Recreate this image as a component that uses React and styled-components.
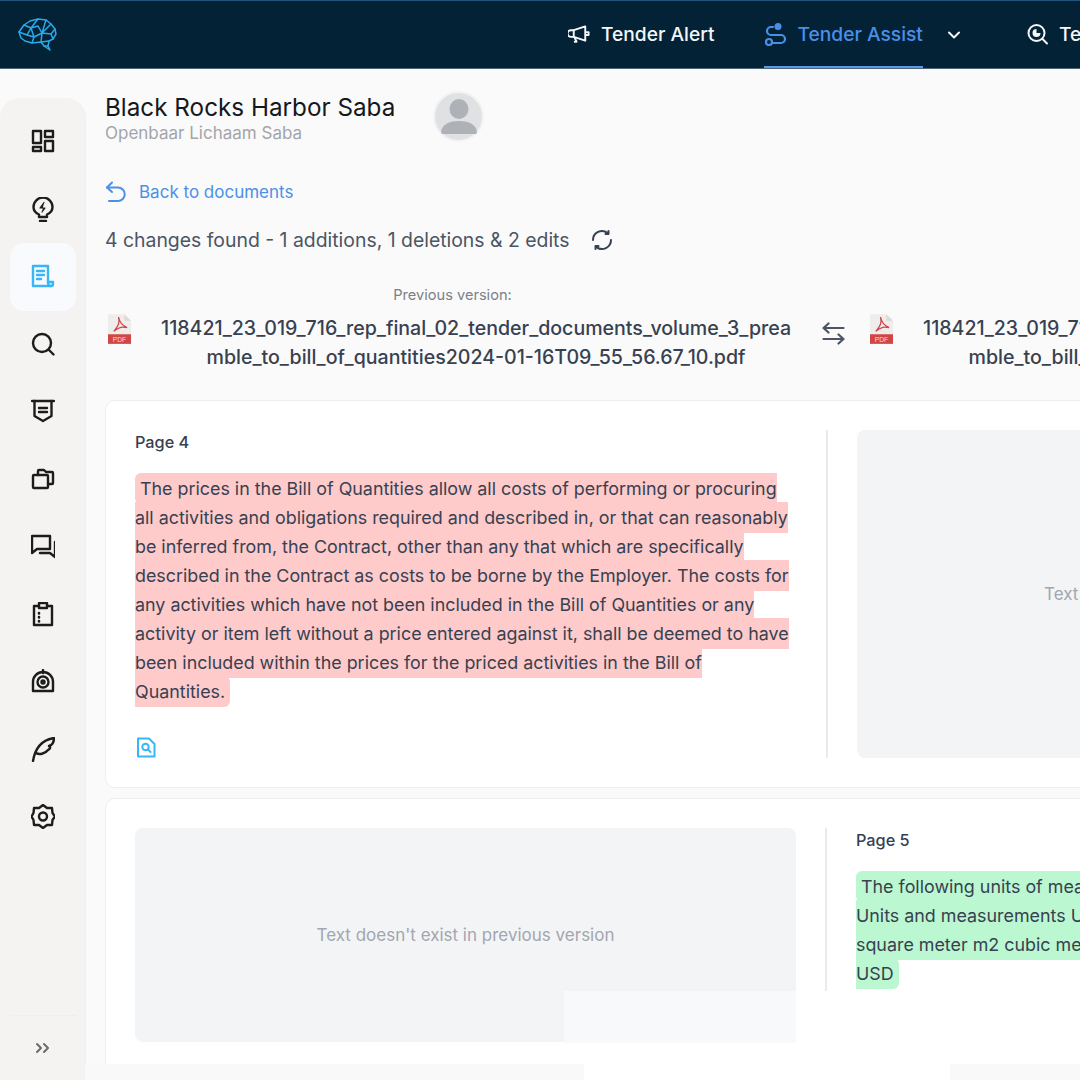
import React from 'react';
import styled, { createGlobalStyle } from 'styled-components';

const GlobalStyle = createGlobalStyle`
  html, body {
    margin: 0;
    padding: 0;
    background: #fafafa;
    font-family: Inter, "Liberation Sans", sans-serif;
  }
  * { box-sizing: border-box; }
`;

const Page = styled.div`
  width: 1080px;
  height: 1080px;
  overflow: hidden;
  position: relative;
  background: #fafafa;
`;

const Header = styled.header`
  height: 69px;
  display: flex;
  align-items: center;
  padding: 0 0 0 18px;
  background: #032236;
  border-top: 1px solid #23527c;
  border-bottom: 1px solid #4d6475;
  white-space: nowrap;
  overflow: hidden;
  > svg { flex: none; }
`;

const Nav = styled.nav`
  display: flex;
  flex: none;
  align-items: stretch;
  height: 67px;
  margin-left: 510px;
`;

const NavItem = styled.a`
  display: flex;
  align-items: center;
  gap: 10px;
  height: 67px;
  margin-right: ${props => props.$gap || 0}px;
  font-size: 19.2px;
  font-weight: 500;
  color: ${props => (props.$active ? '#4a8fe7' : '#f4f6f8')};
  border-bottom: 2px solid ${props => (props.$active ? '#5b9be6' : 'transparent')};
  svg { flex: none; }
`;

const Chevron = styled.span`
  display: flex;
  align-items: center;
  width: 103px;
  padding-left: 24px;
  color: #f4f6f8;
`;

const Body = styled.div`
  display: flex;
  height: 1011px;
`;

const Sidebar = styled.aside`
  flex: none;
  width: 85px;
  margin-top: 29px;
  padding: 10px 9px 0 10px;
  display: flex;
  flex-direction: column;
  background: #f4f3f2;
  border-radius: 20px 20px 0 0;
  box-shadow: 1px 0 0 #f0f0f0;
`;

const SideItem = styled.div`
  flex: none;
  height: 67.5px;
  display: flex;
  align-items: center;
  justify-content: center;
  border-radius: 14px;
  color: ${props => (props.$active ? '#38b6f5' : '#1c1c1c')};
  background: ${props => (props.$active ? '#f8fafd' : 'transparent')};
`;

const SideFooter = styled.div`
  margin-top: auto;
  height: 65px;
  display: flex;
  align-items: center;
  justify-content: center;
  border-top: 1px solid #eceef4;
  color: #6b6b6b;
`;

const Main = styled.main`
  flex: none;
  width: 1500px;
  padding: 22px 0 0 20px;
`;

const TitleRow = styled.div`
  display: flex;
  align-items: flex-start;
  gap: 38px;
  height: 52px;
`;

const TitleBlock = styled.div`
  padding-top: 2px;
`;

const Title = styled.h1`
  margin: 0;
  font-size: 24.25px;
  line-height: 30px;
  font-weight: 400;
  color: #15181c;
`;

const Subtitle = styled.div`
  font-size: 17px;
  line-height: 20px;
  color: #a3a5a9;
`;

const Avatar = styled.div`
  flex: none;
  width: 51px;
  height: 51px;
  border-radius: 50%;
  background: #e0e1e3;
  border: 2px solid #f3f3f3;
  display: flex;
  align-items: center;
  justify-content: center;
`;

const BackLink = styled.a`
  display: flex;
  align-items: center;
  gap: 12px;
  margin-top: 37px;
  height: 24px;
  font-size: 17px;
  color: #4a90e8;
`;

const ChangesRow = styled.div`
  display: flex;
  align-items: center;
  gap: 21px;
  margin-top: 24px;
  height: 24px;
  font-size: 19.4px;
  color: #4b5563;
`;

const FileRow = styled.div`
  display: flex;
  margin-top: 33px;
  height: 115px;
`;

const FileCol = styled.div`
  flex: none;
  width: 695px;
`;

const VersionLabel = styled.div`
  height: 20px;
  font-size: 14.6px;
  line-height: 20px;
  text-align: center;
  color: #7b8087;
`;

const FileLine = styled.div`
  display: flex;
  margin-top: 9px;
  padding-left: 3px;
`;

const FileName = styled.div`
  width: 640px;
  margin-left: 25px;
  font-size: 19.58px;
  font-weight: 500;
  line-height: 29px;
  text-align: center;
  word-break: break-all;
  color: #374151;
`;

const SwapCol = styled.div`
  flex: none;
  width: 67px;
  padding: 37px 0 0 22px;
  color: #4b5563;
`;

const Card = styled.section`
  display: flex;
  width: 1443px;
  margin-bottom: 10px;
  padding: 29px;
  background: #fff;
  border: 1px solid #eeeeee;
  border-radius: 10px;
  height: ${props => props.$height}px;
`;

const Column = styled.div`
  flex: none;
  width: 662px;
  height: ${props => props.$height}px;
`;

const Divider = styled.div`
  flex: none;
  width: 2px;
  margin: 0 29px;
  height: ${props => props.$height}px;
  background: #eaeaea;
`;

const PageLabel = styled.div`
  font-size: 16.3px;
  font-weight: 500;
  line-height: 24px;
  color: #374151;
  margin-bottom: 20px;
`;

const DiffText = styled.p`
  margin: 0;
  width: 656px;
  font-size: 17.86px;
  line-height: 29px;
  color: #374151;
`;

const Highlight = styled.span`
  padding: 5px 0;
  border-radius: 6px;
  background: ${props => (props.$added ? '#bbf7d0' : '#fecaca')};
`;

const InspectButton = styled.div`
  margin-top: 31px;
  padding-left: 1px;
  height: 24px;
  color: #38b6f5;
`;

const Placeholder = styled.div`
  display: flex;
  align-items: center;
  justify-content: ${props => (props.$start ? 'flex-start' : 'center')};
  position: relative;
  width: 662px;
  height: ${props => props.$height}px;
  padding-left: ${props => (props.$start ? 187 : 0)}px;
  border-radius: 8px;
  background: #f3f4f6;
  font-size: 17px;
  color: #a2a6ae;
  white-space: nowrap;
`;

const FadePatch = styled.div`
  position: absolute;
  left: 429px;
  bottom: -1px;
  width: 232px;
  height: 52px;
  background: #f8f9fb;
`;

const BottomPatch = styled.div`
  position: absolute;
  left: ${props => props.$left}px;
  bottom: 0;
  width: ${props => props.$width}px;
  height: 16px;
  background: ${props => props.$bg};
`;

const BrainLogo = () => (
  <svg width="40" height="34" viewBox="0 0 40 34" fill="none" stroke="#29a9ea" strokeWidth="1.5" strokeLinejoin="round" strokeLinecap="round">
    <path d="M1 14 L6 7 L12 3 L20 1 L28 2 L33 6 L37 11 L38 16 L35 21 L31 23 L30 28 L32 32 L26 28 L23 24 L14 25 L7 23 L3 20 Z" />
    <path d="M6 7 L13 10 L20 1 M13 10 L9 17 L1 14 M9 17 L16 19 L14 25 M16 19 L13 10 M16 19 L24 15 L28 2 M24 15 L20 8 L13 10 M24 15 L33 6 M24 15 L33 16 L37 11 M33 16 L35 21 M24 15 L23 24 M23 24 L31 23 M26 28 L30 28" />
  </svg>
);

const Megaphone = () => (
  <svg width="23" height="20" viewBox="0 0 24 20" fill="none" stroke="currentColor" strokeWidth="2" strokeLinejoin="round" strokeLinecap="round">
    <path d="M18 2 L6 6 H3 a3 3 0 0 0 0 7 H6 L18 17 Z" />
    <path d="M6 6 V13 M7 14 L9 18 H7 M19 8 h2.5 v3 H19" />
  </svg>
);

const RouteIcon = () => (
  <svg width="24" height="24" viewBox="0 0 24 24" fill="none" stroke="currentColor" strokeWidth="2.2" strokeLinecap="round">
    <circle cx="14" cy="4.5" r="3.5" fill="currentColor" stroke="none" />
    <path d="M9 5 H7 a3.5 3.5 0 0 0 0 8 H17 a3.5 3.5 0 0 1 0 8 H9" />
    <circle cx="5" cy="20" r="3" />
  </svg>
);

const ChevronDown = () => (
  <svg width="14" height="14" viewBox="0 0 14 14" fill="none" stroke="currentColor" strokeWidth="2" strokeLinecap="round" strokeLinejoin="round">
    <path d="M2 4.5 L7 9.5 L12 4.5" />
  </svg>
);

const SearchPie = () => (
  <svg width="23" height="22" viewBox="0 0 22 22" fill="none" stroke="currentColor" strokeWidth="2" strokeLinecap="round">
    <circle cx="10" cy="10" r="8" />
    <path d="M16 16 L20.5 20.5" />
    <path d="M10 6 a4 4 0 1 0 4 4 H10 Z" fill="currentColor" stroke="none" />
  </svg>
);

const sideIcons = [
  <g key="dash"><rect x="2" y="2" width="8" height="12" /><rect x="14" y="2" width="8" height="6" /><rect x="2" y="18" width="8" height="4" /><rect x="14" y="12" width="8" height="10" /></g>,
  <g key="bulb"><path d="M8 20 V17.500 C4.500 16 2.500 13 2.500 10 a9.500 9.500 0 0 1 19 0 C21.500 13 19.500 16 16 17.500 V20 Z" /><path d="M9 24 H15" /><path d="M13 5.500 L9 11 H14 L11 15" fill="currentColor" strokeWidth="1.200" /></g>,
  <g key="doc"><path d="M17 18 V2 H2 V22 H20" /><path d="M6 7 H13 M6 11 H13 M6 15 H10" /><path d="M17 18 H22 V20 a2 2 0 0 1 -2 2 a3 3 0 0 1 -3 -3 Z" /></g>,
  <g key="search"><circle cx="11" cy="11" r="9" /><path d="M18 18 L22.500 22.500" /></g>,
  <g key="banner"><path d="M1 2 H23" /><path d="M3.500 2 V17 L12 22 L20.500 17 V2" /><path d="M8 9 H16 M8 13 H16" /></g>,
  <g key="folders"><path d="M7 8 V4 a1 1 0 0 1 1 -1 H13 L15 5 H21 a1 1 0 0 1 1 1 V16 a1 1 0 0 1 -1 1 H17" /><path d="M3 8 H16 a1 1 0 0 1 1 1 V20 a1 1 0 0 1 -1 1 H3 a1 1 0 0 1 -1 -1 V9 a1 1 0 0 1 1 -1 Z" /></g>,
  <g key="chat"><path d="M1 2 H19 V15 H6 L1 19 Z" /><path d="M24 8 V23 L19 19 H9" /></g>,
  <g key="clip"><path d="M8 4 H3 V23 H21 V4 H16" /><rect x="8" y="1" width="8" height="5" /><path d="M8 11 V11.500 M8 15 V15.500 M8 19 V19.500" strokeWidth="2.600" /></g>,
  <g key="cam"><path d="M12 1 V4" /><path d="M2 22 V13 a10 10 0 0 1 20 0 V22 Z" /><circle cx="12" cy="13" r="5.500" /><circle cx="12" cy="13" r="1.500" /></g>,
  <g key="feather"><path d="M2 24 C4 12 10 3 23 1 C23 5 21 8 18 9 C20 10 19 12 17 13 C14 17 8 18 5 16" /></g>,
  <g key="gear"><path d="M12 1 L16 4 L21 4 L21.500 9 L24 12.500 L21.500 16 L21 21 L16 21 L12 24 L8 21 L3 21 L2.500 16 L0.500 12.500 L2.500 9 L3 4 L8 4 Z" /><circle cx="12" cy="12.500" r="4" /></g>,
];

const SideIcon = ({ children }) => (
  <svg width="24" height="25" viewBox="0 0 24 25" fill="none" stroke="currentColor" strokeWidth="2.400" strokeLinejoin="round" strokeLinecap="round">
    {children}
  </svg>
);

const DoubleChevron = () => (
  <svg width="16" height="12" viewBox="0 0 16 12" fill="none" stroke="currentColor" strokeWidth="2" strokeLinecap="round" strokeLinejoin="round">
    <path d="M2 2 L6 6 L2 10 M9 2 L13 6 L9 10" />
  </svg>
);

const AvatarFigure = () => (
  <svg width="36" height="35" viewBox="0 0 36 35" fill="#aeb1b6">
    <ellipse cx="18" cy="10" rx="9.500" ry="10" />
    <path d="M0 33 C1 25 9 22 18 22 C27 22 35 25 36 33 Q36 35 34 35 H2 Q0 35 0 33 Z" />
  </svg>
);

const BackIcon = () => (
  <svg width="22" height="22" viewBox="0 0 22 22" fill="none" stroke="currentColor" strokeWidth="2" strokeLinecap="round" strokeLinejoin="round">
    <path d="M7 1.500 L2 6.500 L7 11" />
    <path d="M2 6.500 H13 a6.500 6.500 0 0 1 0 13.500 H4" />
  </svg>
);

const RefreshIcon = () => (
  <svg width="22" height="22" viewBox="0 0 22 22" fill="none" stroke="#374151" strokeWidth="2" strokeLinecap="round" strokeLinejoin="round">
    <path d="M2 11 A9 9 0 0 1 16.500 3.900" />
    <path d="M20 11 A9 9 0 0 1 5.500 18.100" />
    <path d="M17.500 2 V5 H14.500" />
    <path d="M4.500 20 V17 H7.500" />
  </svg>
);

const PdfIcon = () => (
  <svg width="23" height="30" viewBox="0 0 24 31" style={{ flex: 'none' }}>
    <path d="M0 0 H17 L24 7 V31 H0 Z" fill="#efedec" />
    <path d="M17 0 L24 7 H17 Z" fill="#dcdada" />
    <rect y="21" width="24" height="10" fill="#d24545" />
    <path d="M11 3 C12 8 12 11 6 18 C12 13 15 13 20 14 C15 12 12 9 11 3 Z" fill="none" stroke="#d24545" strokeWidth="1.300" />
    <text x="12" y="29" textAnchor="middle" fontSize="7" fill="#f6d9d9" fontFamily="Liberation Sans, sans-serif">PDF</text>
  </svg>
);

const SwapIcon = () => (
  <svg width="23" height="23" viewBox="0 0 23 23" fill="none" stroke="currentColor" strokeWidth="2.200" strokeLinecap="round" strokeLinejoin="round">
    <path d="M6.500 1.500 L1.500 6 L6.500 10.500 M1.500 6 H21.500" />
    <path d="M16.500 12.500 L21.500 17 L16.500 21.500 M21.500 17 H1.500" />
  </svg>
);

const FileSearchIcon = () => (
  <svg width="20" height="21" viewBox="0 0 20 21" fill="none" stroke="currentColor" strokeWidth="2" strokeLinecap="round" strokeLinejoin="round">
    <path d="M2 1.500 H13 L18.500 7 V19.500 H2 Z" />
    <circle cx="9.500" cy="10" r="3.200" />
    <path d="M12 12.500 L14.500 15" />
  </svg>
);

const deletedText = '\u00A0The prices in the Bill of Quantities allow all costs of performing or procuring all activities and obligations required and described in, or that can reasonably be inferred from, the Contract, other than any that which are specifically described in the Contract as costs to be borne by the Employer. The costs for any activities which have not been included in the Bill of Quantities or any activity or item left without a price entered against it, shall be deemed to have been included within the prices for the priced activities in the Bill of Quantities.\u00A0';

const addedLines = [
  '\u00A0The following units of measurement and abbreviations',
  'Units and measurements Unit of measure meter m',
  'square meter m2 cubic meter m3 kilogram kg lump sum',
  'USD\u00A0',
];

const fileName = '118421_23_019_716_rep_final_02_tender_documents_volume_3_preamble_to_bill_of_quantities2024-01-16T09_55_56.67_10.pdf';

const FileBlock = ({ label }) => (
  <FileCol>
    <VersionLabel>{label}</VersionLabel>
    <FileLine>
      <PdfIcon />
      <FileName>{fileName}</FileName>
    </FileLine>
  </FileCol>
);

const App = () => (
  <Page>
    <GlobalStyle />
    <Header>
      <BrainLogo />
      <Nav>
        <NavItem $gap={49}><Megaphone />Tender Alert</NavItem>
        <NavItem $active><RouteIcon />Tender Assist</NavItem>
        <Chevron><ChevronDown /></Chevron>
        <NavItem><SearchPie />Tender Insights</NavItem>
      </Nav>
    </Header>
    <Body>
      <Sidebar>
        {sideIcons.map((icon, i) => (
          <SideItem key={i} $active={i === 2}>
            <SideIcon>{icon}</SideIcon>
          </SideItem>
        ))}
        <SideFooter><DoubleChevron /></SideFooter>
      </Sidebar>
      <Main>
        <TitleRow>
          <TitleBlock>
            <Title>Black Rocks Harbor Saba</Title>
            <Subtitle>Openbaar Lichaam Saba</Subtitle>
          </TitleBlock>
          <Avatar><AvatarFigure /></Avatar>
        </TitleRow>
        <BackLink><BackIcon />Back to documents</BackLink>
        <ChangesRow>
          4 changes found - 1 additions, 1 deletions &amp; 2 edits
          <RefreshIcon />
        </ChangesRow>
        <FileRow>
          <FileBlock label="Previous version:" />
          <SwapCol><SwapIcon /></SwapCol>
          <FileBlock label="Current version:" />
        </FileRow>
        <Card $height={388}>
          <Column $height={328}>
            <PageLabel>Page 4</PageLabel>
            <DiffText><Highlight>{deletedText}</Highlight></DiffText>
            <InspectButton><FileSearchIcon /></InspectButton>
          </Column>
          <Divider $height={328} />
          <Placeholder $height={328} $start>Text doesn't exist in current version</Placeholder>
        </Card>
        <Card $height={300}>
          <Placeholder $height={214}>
            Text doesn't exist in previous version
            <FadePatch />
          </Placeholder>
          <Divider $height={163} />
          <Column $height={163}>
            <PageLabel>Page 5</PageLabel>
            <DiffText>
              <Highlight $added>
                {addedLines.map((line, i) => (
                  <React.Fragment key={i}>{line}{i < addedLines.length - 1 && <br />}</React.Fragment>
                ))}
              </Highlight>
            </DiffText>
          </Column>
        </Card>
      </Main>
    </Body>
    <BottomPatch $left={85} $width={499} $bg="#f9f9f9" />
    <BottomPatch $left={584} $width={366} $bg="#ffffff" />
    <BottomPatch $left={950} $width={130} $bg="#f9f9f9" />
  </Page>
);

export default App;
